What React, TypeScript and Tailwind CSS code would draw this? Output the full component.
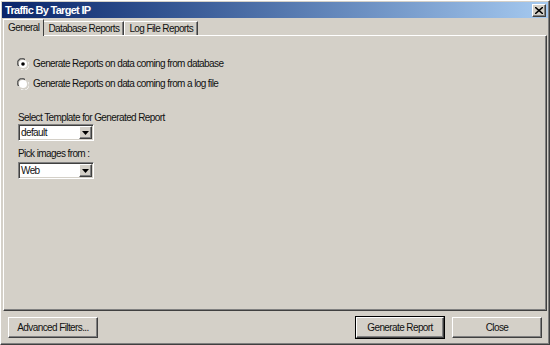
import React from "react";

const raised =
  "border border-t-white border-l-white border-r-[#404040] border-b-[#404040] shadow-[inset_-1px_-1px_0_#808080,inset_1px_1px_0_#d4d0c8]";
const sunken =
  "border border-t-[#808080] border-l-[#808080] border-r-white border-b-white shadow-[inset_1px_1px_0_#404040,inset_-1px_-1px_0_#d4d0c8]";

function Radio({ checked, label }: { checked?: boolean; label: string }) {
  return (
    <div className="flex h-[13px] items-center gap-[4px]">
      <svg width="12" height="12" viewBox="0 0 12 12">
        <path d="M1 8 A5 5 0 0 1 8 1" stroke="#808080" fill="none" strokeWidth="1" />
        <path d="M2 8 A4 4 0 0 1 8 2" stroke="#404040" fill="none" strokeWidth="1" />
        <circle cx="6" cy="6" r="4" fill="white" />
        <path d="M4 11 A5 5 0 0 0 11 4" stroke="white" fill="none" strokeWidth="1" />
        <path d="M4 10 A4 4 0 0 0 10 4" stroke="#d4d0c8" fill="none" strokeWidth="1" />
        {checked && <circle cx="6" cy="6" r="1.8" fill="black" />}
      </svg>
      <span>{label}</span>
    </div>
  );
}

function Combo({ value }: { value: string }) {
  return (
    <div className={`flex h-[17px] w-[76px] items-center bg-white ${sunken}`}>
      <span className="flex-1 pl-[2px] leading-none">{value}</span>
      <div className={`mr-[1px] flex h-[13px] w-[13px] items-center justify-center bg-[#d4d0c8] ${raised}`}>
        <svg width="7" height="4" viewBox="0 0 7 4">
          <path d="M0 0h7L3.5 4z" fill="black" />
        </svg>
      </div>
    </div>
  );
}

function Button({ label, w, focus }: { label: string; w: string; focus?: boolean }) {
  return (
    <div
      className={`flex h-[21px] items-center justify-center whitespace-nowrap bg-[#d4d0c8] ${w} ${raised} ${focus ? "outline outline-1 outline-black" : ""}`}
    >
      {label}
    </div>
  );
}

export default function App() {
  const tabs = ["General", "Database Reports", "Log File Reports"];
  return (
    <div
      className="flex h-[345px] w-[550px] flex-col bg-[#d4d0c8] text-[10px] leading-[13px] tracking-[-0.6px] text-[#111]"
      style={{ fontFamily: '"Liberation Sans", Arial, sans-serif' }}
    >
      <div className={`flex h-full flex-col ${raised}`}>
        {/* title bar */}
        <div className="mx-[1px] mt-[1px] flex h-[16px] items-center justify-between bg-gradient-to-r from-[#0a246a] to-[#a6caf0] pl-[3px] pr-[2px]">
          <span className="text-[11px] font-bold tracking-[-0.7px] text-white">Traffic By Target IP</span>
          <div className={`flex h-[13px] w-[14px] items-center justify-center bg-[#d4d0c8] ${raised}`}>
            <svg width="8" height="7" viewBox="0 0 8 7">
              <path d="M0 0l8 7M8 0L0 7" stroke="black" strokeWidth="1.5" />
            </svg>
          </div>
        </div>

        {/* tabs */}
        <div className="mt-[1px] flex px-[2px]">
          {tabs.map((t, i) => (
            <div
              key={t}
              className={`flex items-center border-l border-t border-r border-l-white border-t-white border-r-[#404040] px-[4px] ${
                i === 0
                  ? "z-10 -mb-[1px] h-[17px] bg-[#d4d0c8] pb-[1px]"
                  : "mt-[2px] h-[14px] shadow-[inset_-1px_0_0_#808080]"
              } ${i === 1 ? "-ml-[1px]" : ""}`}
            >
              {t}
            </div>
          ))}
        </div>

        {/* tab panel */}
        <div className="mx-[2px] flex flex-1 flex-col border border-t-white border-l-white border-r-[#404040] border-b-[#404040] pl-[13px] pt-[21px] shadow-[inset_-1px_-1px_0_#808080]">
          <div className="flex flex-col gap-[7px]">
            <Radio checked label="Generate Reports on data coming from database" />
            <Radio label="Generate Reports on data coming from a log file" />
          </div>
          <div className="mt-[21px] pl-[1px]">
            <div>Select Template for Generated Report</div>
            <Combo value="default" />
            <div className="mb-[2px] mt-[6px]">Pick images from :</div>
            <Combo value="Web" />
          </div>
        </div>

        {/* buttons */}
        <div className="flex items-center justify-between px-[7px] pb-[6px] pt-[6px]">
          <Button label="Advanced Filters..." w="w-[90px]" />
          <div className="flex gap-[8px]">
            <Button label="Generate Report" w="w-[88px]" focus />
            <Button label="Close" w="w-[90px]" />
          </div>
        </div>
      </div>
    </div>
  );
}
